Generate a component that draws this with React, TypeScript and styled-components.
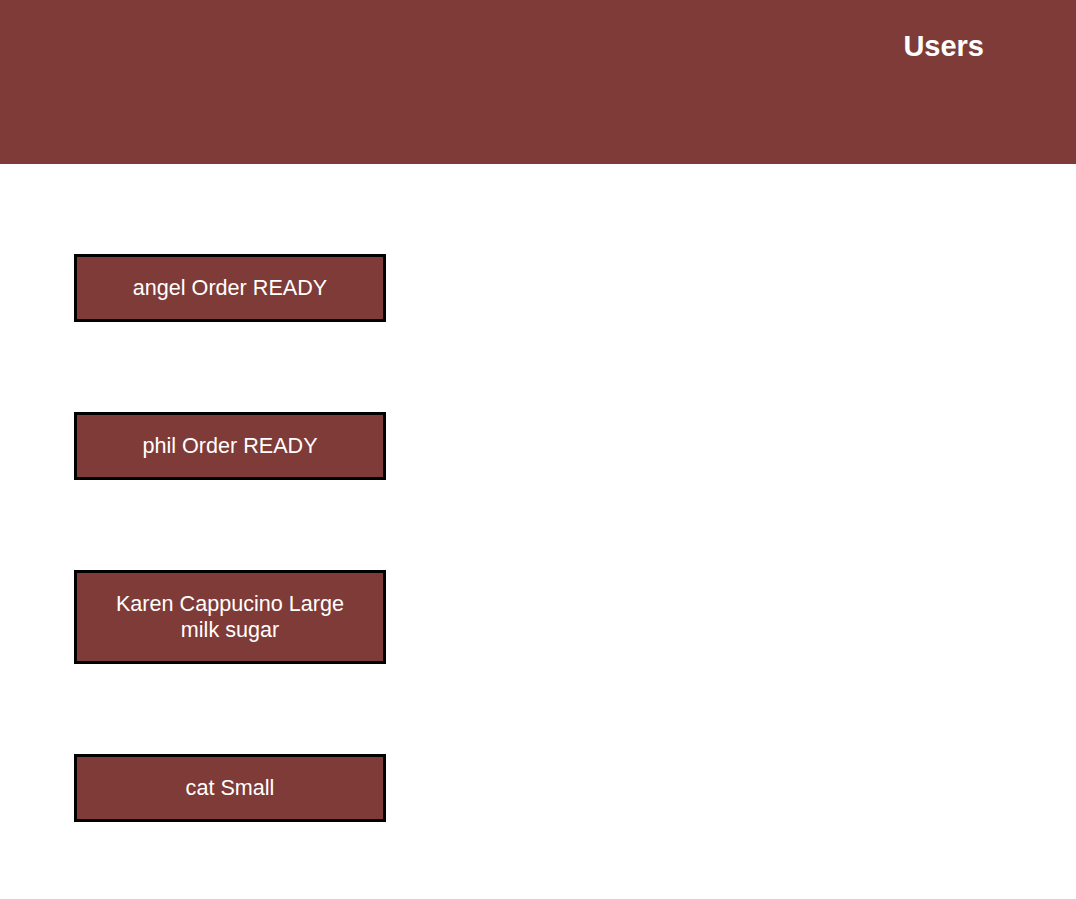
import React from 'react'
import styled, { createGlobalStyle } from 'styled-components'

const GlobalStyle = createGlobalStyle`
  html, body {
    margin: 0;
    padding: 0;
    background: #ffffff;
    font-family: "Liberation Sans", Arial, sans-serif;
  }
`

const orders = [
  'angel Order READY',
  'phil Order READY',
  'Karen Cappucino Large milk sugar',
  'cat Small',
]

const App = () => {
  return (
    <>
      <GlobalStyle />
      <Header>
        <Title>Users</Title>
      </Header>
      <List>
        {orders.map((o) => (
          <OrderButton key={o}>{o}</OrderButton>
        ))}
      </List>
    </>
  )
}

const Header = styled.header`
  height: 164px;
  background: #7f3b37;
  display: flex;
  justify-content: flex-end;
  align-items: flex-start;
  padding-right: 92px;
  box-sizing: border-box;
`

const Title = styled.h1`
  margin: 30px 0 0;
  color: #ffffff;
  font-size: 29px;
  font-weight: 700;
  line-height: 33px;
`

const List = styled.div`
  display: flex;
  flex-direction: column;
  align-items: flex-start;
  gap: 90px;
  padding: 90px 0 0 74px;
`

const OrderButton = styled.div`
  width: 312px;
  box-sizing: border-box;
  border: 3px solid #000000;
  background: #7f3b37;
  color: #ffffff;
  font-size: 21.6px;
  line-height: 26px;
  text-align: center;
  padding: 18px 30px;
`

export default App
